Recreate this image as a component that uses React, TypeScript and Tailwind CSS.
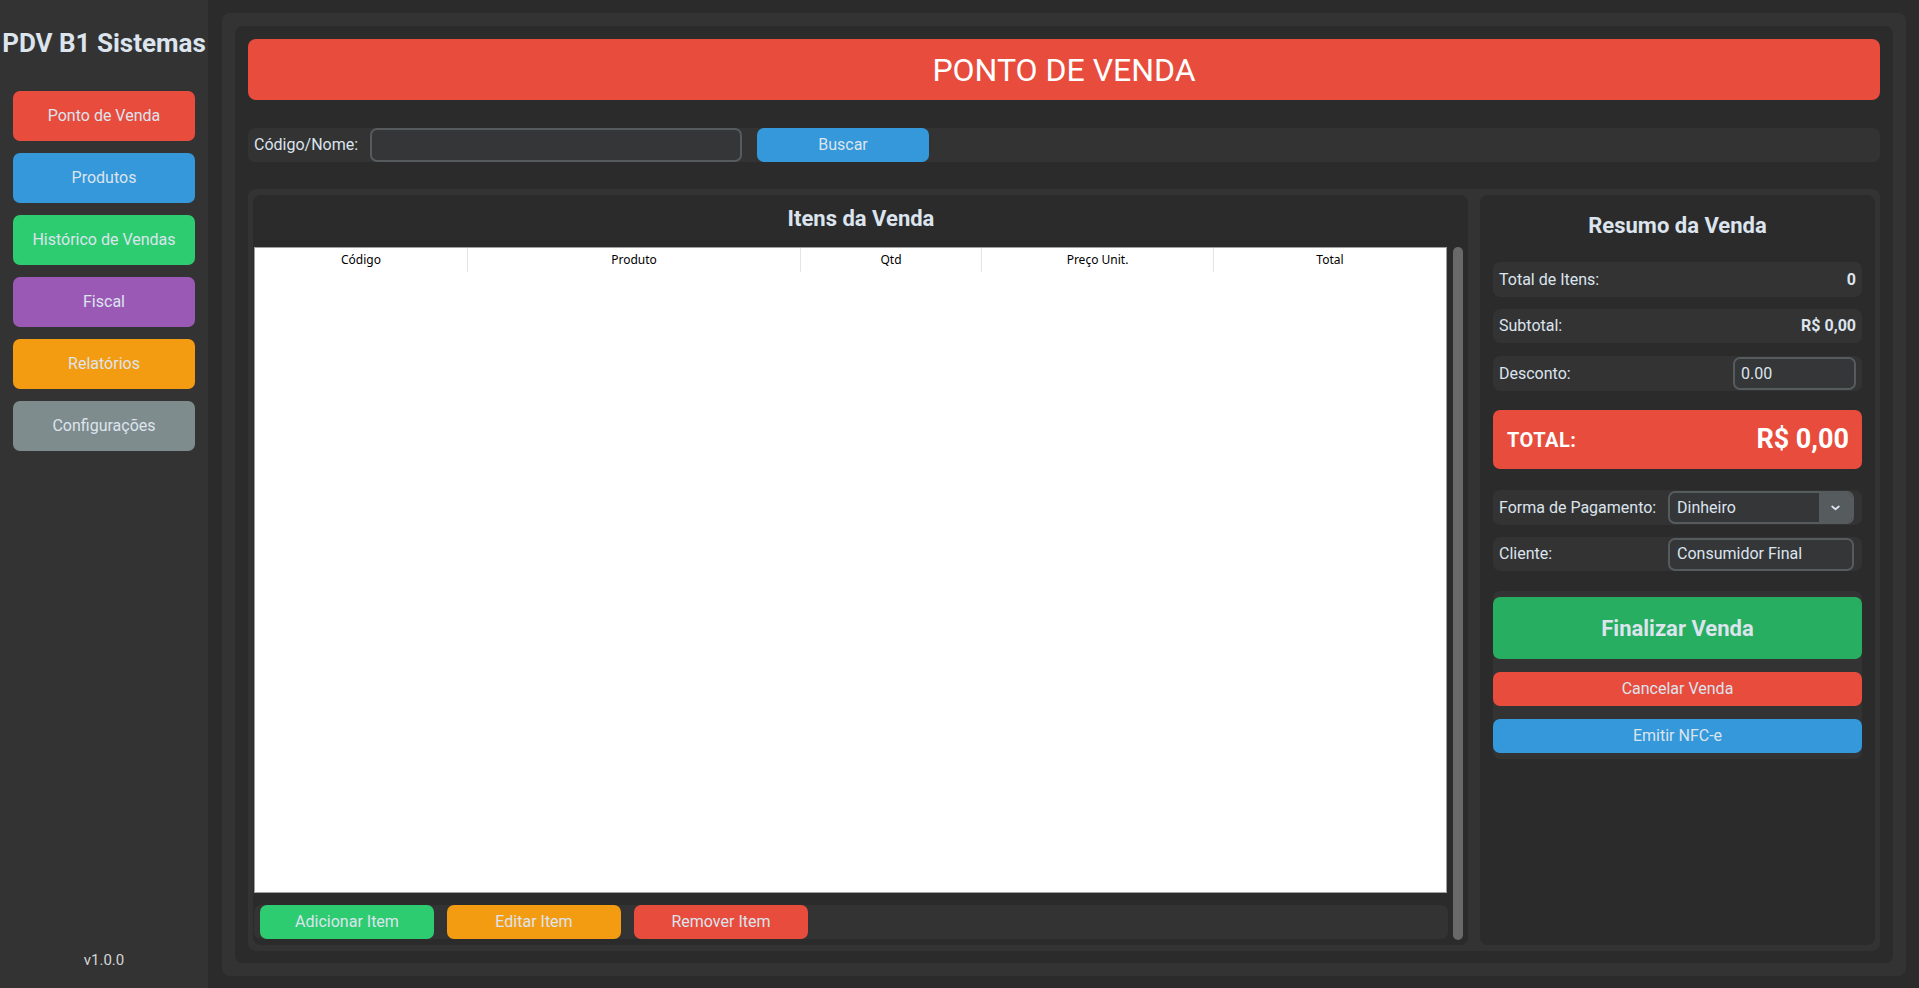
import React from 'react';

const font = { fontFamily: 'Roboto, "Noto Sans", sans-serif' };

const sideItems = [
  { label: 'Ponto de Venda', color: 'bg-[#e74c3c]' },
  { label: 'Produtos', color: 'bg-[#3498db]' },
  { label: 'Histórico de Vendas', color: 'bg-[#2ecc71]' },
  { label: 'Fiscal', color: 'bg-[#9b59b6]' },
  { label: 'Relatórios', color: 'bg-[#f39c12]' },
  { label: 'Configurações', color: 'bg-[#7f8c8d]' },
];

const columns = [
  { label: 'Código', w: 'w-[213px]' },
  { label: 'Produto', w: 'w-[333px]' },
  { label: 'Qtd', w: 'w-[181px]' },
  { label: 'Preço Unit.', w: 'w-[232px]' },
  { label: 'Total', w: 'flex-1' },
];

const Sidebar: React.FC = () => (
  <div className="w-[208px] shrink-0 h-full bg-[#333333] flex flex-col">
    <div className="mt-[28px] h-[30px] flex items-center justify-center whitespace-nowrap text-[26px] font-bold text-[#dce4ee]">
      PDV B1 Sistemas
    </div>
    {/* Menu */}
    <div className="mt-[33px] flex flex-col gap-[12px] px-[13px]">
      {sideItems.map((item) => (
        <button
          key={item.label}
          className={`h-[50px] w-[182px] rounded-[7px] ${item.color} text-[16px] text-[#dce4ee]`}
        >
          {item.label}
        </button>
      ))}
    </div>
    <div className="mt-auto mb-[18px] h-[20px] flex items-center justify-center text-[15px] text-[#d6d6d6]">
      v1.0.0
    </div>
  </div>
);

const SummaryRow: React.FC<{ className?: string; children: React.ReactNode }> = ({ className = '', children }) => (
  <div className={`bg-[#333333] rounded-[7px] flex items-center pl-[6px] pr-[6px] ${className}`}>{children}</div>
);

const ItemsPanel: React.FC = () => (
  <div className="w-[1215px] shrink-0 bg-[#2b2b2b] rounded-[8px] pl-[1px] flex flex-col">
    <div className="h-[52px] pb-[6px] flex items-center justify-center text-[22px] font-bold text-[#dce4ee]">
      Itens da Venda
    </div>
    <div className="flex-1 flex">
      <div className="w-[1194px] flex flex-col pb-[6px]">
        {/* Table */}
        <div className="h-[646px] w-[1193px] bg-white border border-[#a0a0a0]" style={{ fontFamily: '"Noto Sans", sans-serif' }}>
          <div className="flex h-[24px]">
            {columns.map((c) => (
              <div
                key={c.label}
                className={`${c.w} flex items-center justify-center text-[12px] text-black border-r border-[#e5e5e5] last:border-r-0`}
              >
                {c.label}
              </div>
            ))}
          </div>
        </div>
        {/* Actions */}
        <div className="mt-[12px] h-[34px] bg-[#333333] rounded-[7px] flex items-center gap-[13px] pl-[6px]">
          <button className="h-[34px] w-[174px] rounded-[7px] bg-[#2ecc71] text-[16px] text-[#dce4ee]">Adicionar Item</button>
          <button className="h-[34px] w-[174px] rounded-[7px] bg-[#f39c12] text-[16px] text-[#dce4ee]">Editar Item</button>
          <button className="h-[34px] w-[174px] rounded-[7px] bg-[#e74c3c] text-[16px] text-[#dce4ee]">Remover Item</button>
        </div>
      </div>
      <div className="w-[20px] pb-[5px] flex">
        <div className="ml-[5px] w-[10px] h-full rounded-full bg-[#696969]" />
      </div>
    </div>
  </div>
);

const SummaryPanel: React.FC = () => (
  <div className="flex-1 bg-[#2b2b2b] rounded-[8px] px-[13px] flex flex-col text-[16px] text-[#dce4ee]">
    <div className="mt-[15px] h-[30px] flex items-center justify-center text-[22px] font-bold">Resumo da Venda</div>

    <SummaryRow className="mt-[22px] h-[35px] justify-between">
      <span>Total de Itens:</span>
      <span className="font-bold">0</span>
    </SummaryRow>
    <SummaryRow className="mt-[12px] h-[34px] justify-between">
      <span>Subtotal:</span>
      <span className="font-bold">R$ 0,00</span>
    </SummaryRow>
    <SummaryRow className="mt-[13px] h-[35px] justify-between">
      <span>Desconto:</span>
      <div className="h-[33px] w-[123px] rounded-[7px] border-2 border-[#565b5e] bg-[#343638] flex items-center pl-[6px] text-[#dce4ee]">
        0.00
      </div>
    </SummaryRow>

    <div className="mt-[19px] h-[59px] rounded-[7px] bg-[#e74c3c] flex items-center justify-between pl-[14px] pr-[13px] text-white">
      <span className="text-[20px] font-bold tracking-[0.5px]">TOTAL:</span>
      <span className="text-[27px] font-bold">R$ 0,00</span>
    </div>

    <SummaryRow className="mt-[21px] h-[35px]">
      <span className="w-[169px]">Forma de Pagamento:</span>
      <div className="h-[33px] w-[186px] rounded-[7px] border-2 border-[#565b5e] bg-[#343638] flex items-center overflow-hidden">
        <span className="flex-1 pl-[7px]">Dinheiro</span>
        <div className="w-[33px] h-full bg-[#565b5e] flex items-center justify-center">
          <svg width="9" height="6" viewBox="0 0 9 6" fill="none">
            <path d="M1.2 1.5 L4.5 4.2 L7.8 1.5" stroke="#dce4ee" strokeWidth="1.8" strokeLinecap="round" strokeLinejoin="round" />
          </svg>
        </div>
      </div>
    </SummaryRow>
    <SummaryRow className="mt-[12px] h-[34px]">
      <span className="w-[169px]">Cliente:</span>
      <div className="h-[33px] w-[186px] rounded-[7px] border-2 border-[#565b5e] bg-[#343638] flex items-center pl-[7px]">
        Consumidor Final
      </div>
    </SummaryRow>

    {/* Buttons */}
    <div className="mt-[20px] h-[168px] rounded-[7px] bg-[#333333] flex flex-col pt-[6px]">
      <button className="h-[62px] rounded-[7px] bg-[#27ae60] text-[22px] font-bold text-[#dce4ee]">Finalizar Venda</button>
      <button className="mt-[13px] h-[34px] rounded-[7px] bg-[#e74c3c] text-[16px] text-[#dce4ee]">Cancelar Venda</button>
      <button className="mt-[13px] h-[34px] rounded-[7px] bg-[#3498db] text-[16px] text-[#dce4ee]">Emitir NFC-e</button>
    </div>
  </div>
);

const App: React.FC = () => {
  return (
    <div className="h-[988px] w-full bg-[#2b2b2b] flex overflow-hidden" style={font}>
      <Sidebar />

      {/* Main area */}
      <div className="flex-1 flex pl-[14px] pr-[13px] pt-[13px] pb-[12px]">
        <div className="flex-1 bg-[#333333] rounded-[8px] p-[13px] flex">
          <div className="flex-1 bg-[#2b2b2b] rounded-[8px] px-[13px] pt-[13px] pb-[12px] flex flex-col">
            {/* Header */}
            <div className="h-[61px] rounded-[8px] bg-[#e74c3c] flex items-center justify-center text-[32px] text-white">
              PONTO DE VENDA
            </div>

            {/* Search */}
            <div className="mt-[28px] h-[34px] rounded-[7px] bg-[#333333] flex items-center text-[16px] text-[#dce4ee]">
              <div className="w-[122px] pl-[6px]">Código/Nome:</div>
              <div className="h-[34px] w-[372px] rounded-[7px] border-2 border-[#565b5e] bg-[#343638]" />
              <button className="ml-[15px] h-[34px] w-[172px] rounded-[7px] bg-[#3498db] text-[16px] text-[#dce4ee]">Buscar</button>
            </div>

            {/* Content */}
            <div className="mt-[27px] flex-1 rounded-[8px] bg-[#333333] px-[5px] py-[6px] flex gap-[12px]">
              <ItemsPanel />
              <SummaryPanel />
            </div>
          </div>
        </div>
      </div>
    </div>
  );
};

export default App;
